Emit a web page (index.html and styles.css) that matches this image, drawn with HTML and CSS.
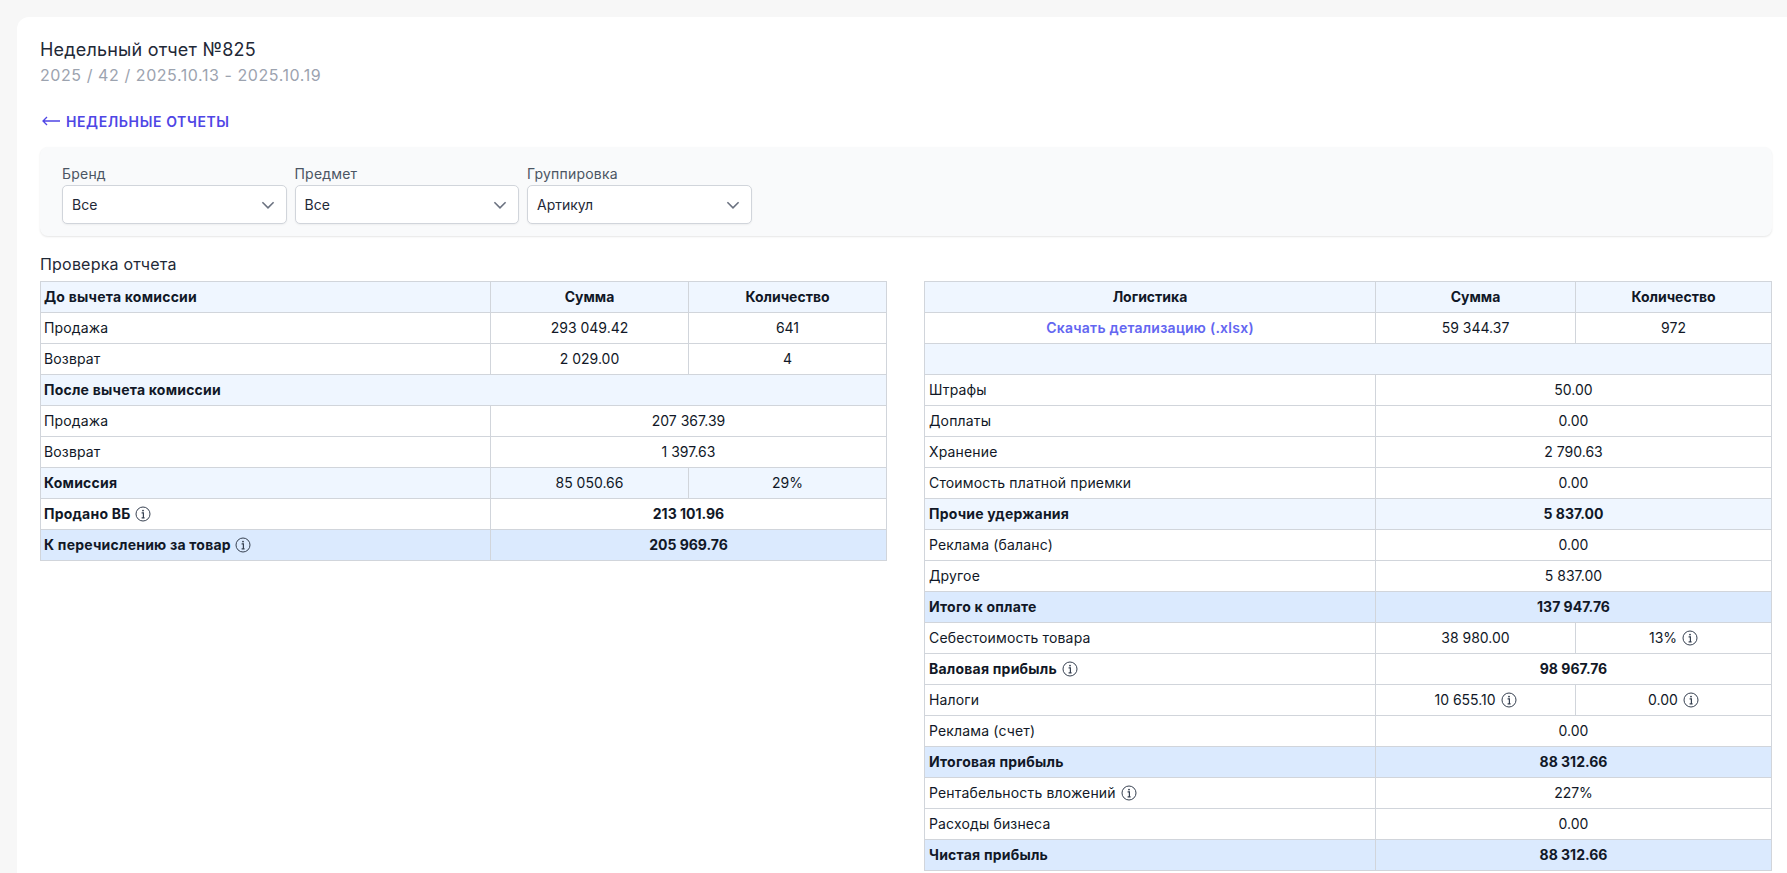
FILE: index.html
```html
<!DOCTYPE html>
<html lang="ru">
<head>
<meta charset="utf-8">
<title>Недельный отчет №825</title>
<link rel="stylesheet" href="styles.css">
</head>
<body>
<svg class="defs" width="0" height="0" aria-hidden="true">
  <symbol id="info" viewBox="0 0 16 16">
    <circle cx="8" cy="8" r="7" fill="none" stroke="currentColor" stroke-width="1"/>
    <path d="M6.6 6.9H8.4V11.6M6.6 11.8H9.6" fill="none" stroke="currentColor" stroke-width="1.2"/>
    <circle cx="8" cy="4.6" r="0.95" fill="currentColor"/>
  </symbol>
  <symbol id="chev" viewBox="0 0 20 20">
    <path d="M3 6.5l7 7 7-7" fill="none" stroke="currentColor" stroke-width="2"/>
  </symbol>
</svg>
<main class="card">
  <header class="head">
    <h1 class="title">Недельный отчет №825</h1>
    <p class="sub">2025 / 42 / 2025.10.13 - 2025.10.19</p>
  </header>
  <a class="back" href="#">
    <svg class="arrow" viewBox="0 0 18 10" width="18" height="10"><path d="M18 5H1M5 1L1 5l4 4" fill="none" stroke="currentColor" stroke-width="1.3"/></svg>
    <span>Недельные отчеты</span>
  </a>
  <section class="filters">
    <div class="field"><label class="label">Бренд</label><div class="select"><span>Все</span><svg class="chev"><use href="#chev"/></svg></div></div>
    <div class="field"><label class="label">Предмет</label><div class="select"><span>Все</span><svg class="chev"><use href="#chev"/></svg></div></div>
    <div class="field"><label class="label">Группировка</label><div class="select"><span>Артикул</span><svg class="chev"><use href="#chev"/></svg></div></div>
  </section>
  <h2 class="section-title">Проверка отчета</h2>
  <div class="tables">
    <table class="tbl tbl-left">
      <colgroup><col class="c1"><col class="c2"><col class="c3"></colgroup>
      <tr class="light"><th class="l">До вычета комиссии</th><th>Сумма</th><th>Количество</th></tr>
      <tr><td class="l">Продажа</td><td>293 049.42</td><td>641</td></tr>
      <tr><td class="l">Возврат</td><td>2 029.00</td><td>4</td></tr>
      <tr class="light"><th class="l" colspan="3">После вычета комиссии</th></tr>
      <tr><td class="l">Продажа</td><td colspan="2">207 367.39</td></tr>
      <tr><td class="l">Возврат</td><td colspan="2">1 397.63</td></tr>
      <tr class="light"><th class="l">Комиссия</th><td>85 050.66</td><td>29%</td></tr>
      <tr><th class="l">Продано ВБ <svg class="i"><use href="#info"/></svg></th><th colspan="2">213 101.96</th></tr>
      <tr class="dark"><th class="l">К перечислению за товар <svg class="i"><use href="#info"/></svg></th><th colspan="2">205 969.76</th></tr>
    </table>
    <table class="tbl tbl-right">
      <colgroup><col class="c1"><col class="c2"><col class="c3"></colgroup>
      <tr class="light"><th>Логистика</th><th>Сумма</th><th>Количество</th></tr>
      <tr><td><a class="dl" href="#">Скачать детализацию (.xlsx)</a></td><td>59 344.37</td><td>972</td></tr>
      <tr class="light"><td colspan="3">&nbsp;</td></tr>
      <tr><td class="l">Штрафы</td><td colspan="2">50.00</td></tr>
      <tr><td class="l">Доплаты</td><td colspan="2">0.00</td></tr>
      <tr><td class="l">Хранение</td><td colspan="2">2 790.63</td></tr>
      <tr><td class="l">Стоимость платной приемки</td><td colspan="2">0.00</td></tr>
      <tr class="light"><th class="l">Прочие удержания</th><th colspan="2">5 837.00</th></tr>
      <tr><td class="l">Реклама (баланс)</td><td colspan="2">0.00</td></tr>
      <tr><td class="l">Другое</td><td colspan="2">5 837.00</td></tr>
      <tr class="dark"><th class="l">Итого к оплате</th><th colspan="2">137 947.76</th></tr>
      <tr><td class="l">Себестоимость товара</td><td>38 980.00</td><td>13% <svg class="i"><use href="#info"/></svg></td></tr>
      <tr><th class="l">Валовая прибыль <svg class="i"><use href="#info"/></svg></th><th colspan="2">98 967.76</th></tr>
      <tr><td class="l">Налоги</td><td>10 655.10 <svg class="i"><use href="#info"/></svg></td><td>0.00 <svg class="i"><use href="#info"/></svg></td></tr>
      <tr><td class="l">Реклама (счет)</td><td colspan="2">0.00</td></tr>
      <tr class="dark"><th class="l">Итоговая прибыль</th><th colspan="2">88 312.66</th></tr>
      <tr><td class="l">Рентабельность вложений <svg class="i"><use href="#info"/></svg></td><td colspan="2">227%</td></tr>
      <tr><td class="l">Расходы бизнеса</td><td colspan="2">0.00</td></tr>
      <tr class="dark"><th class="l">Чистая прибыль</th><th colspan="2">88 312.66</th></tr>
    </table>
  </div>
</main>
</body>
</html>
```
FILE: styles.css
```css
* { box-sizing: border-box; }
html, body { height: 100%; }
body {
  margin: 0;
  height: 873px;
  overflow: hidden;
  background: #f7f7f7;
  color: #111827;
  font-family: Inter, "Noto Sans", sans-serif;
  font-size: 14px;
  padding: 17px 0 0 17px;
}
.defs { position: absolute; }
.card {
  background: #fff;
  border-radius: 12px 0 0 0;
  padding: 21px 15px 40px 23px;
  min-height: 900px;
}
.title { margin: 0; font-size: 18px; line-height: 24px; font-weight: 400; letter-spacing: 0.2px; color: #1f2937; }
.sub { margin: 1px 0 0; font-size: 16px; line-height: 24px; letter-spacing: 0.57px; color: #9ca3af; }
.back {
  display: flex;
  align-items: center;
  gap: 6px;
  margin-top: 24px;
  height: 20px;
  color: #4f46e5;
  font-size: 14px;
  font-weight: 600;
  letter-spacing: 0.6px;
  text-transform: uppercase;
  text-decoration: none;
}
.arrow { flex: none; margin-left: 2px; }
.filters {
  display: flex;
  gap: 8px;
  margin-top: 16px;
  height: 89px;
  padding: 16px 22px 0;
  background: #f9fafb;
  border-radius: 8px;
  box-shadow: 0 1px 2px rgba(0, 0, 0, 0.1);
}
.field { width: 224.5px; }
.label { display: block; height: 22px; line-height: 22px; color: #4b5563; font-size: 14px; letter-spacing: 0.2px; }
.select {
  display: flex;
  align-items: center;
  justify-content: space-between;
  height: 39px;
  padding: 0 10px 0 9px;
  background: #fff;
  border: 1px solid #d1d5db;
  border-radius: 5px;
  box-shadow: 0 1px 2px rgba(0, 0, 0, 0.05);
  color: #1f2937;
}
.chev { width: 16px; height: 16px; color: #6b7280; }
.section-title { margin: 17px 0 0; font-size: 16px; line-height: 22px; font-weight: 400; letter-spacing: 0.2px; color: #1f2937; }
.tables {
  display: grid;
  grid-template-columns: 847px 848px;
  gap: 37px;
  margin-top: 6px;
  align-items: start;
}
.tbl { width: 100%; table-layout: fixed; border-collapse: collapse; }
.tbl-left .c1 { width: 450px; }
.tbl-left .c2 { width: 198px; }
.tbl-right .c1 { width: 451px; }
.tbl-right .c2 { width: 200px; }
.tbl tr { height: 31px; }
.tbl th, .tbl td {
  border: 1px solid #d1d5db;
  padding: 0 4px;
  text-align: center;
  color: #111827;
  font-size: 14px;
  line-height: 20px;
  white-space: nowrap;
}
.tbl th { font-weight: 700; }
.tbl .l { text-align: left; letter-spacing: 0.15px; }
.tbl th.l { letter-spacing: 0.22px; }
.tbl-left .l { padding-left: 3px; }
.light th, .light td { background: #eff6ff; }
.dark th, .dark td { background: #dbeafe; }
.dl { color: #6366f1; font-weight: 600; letter-spacing: 0.25px; text-decoration: none; }
.i { width: 16px; height: 16px; margin-left: 1px; vertical-align: -3px; color: #374151; }
```
